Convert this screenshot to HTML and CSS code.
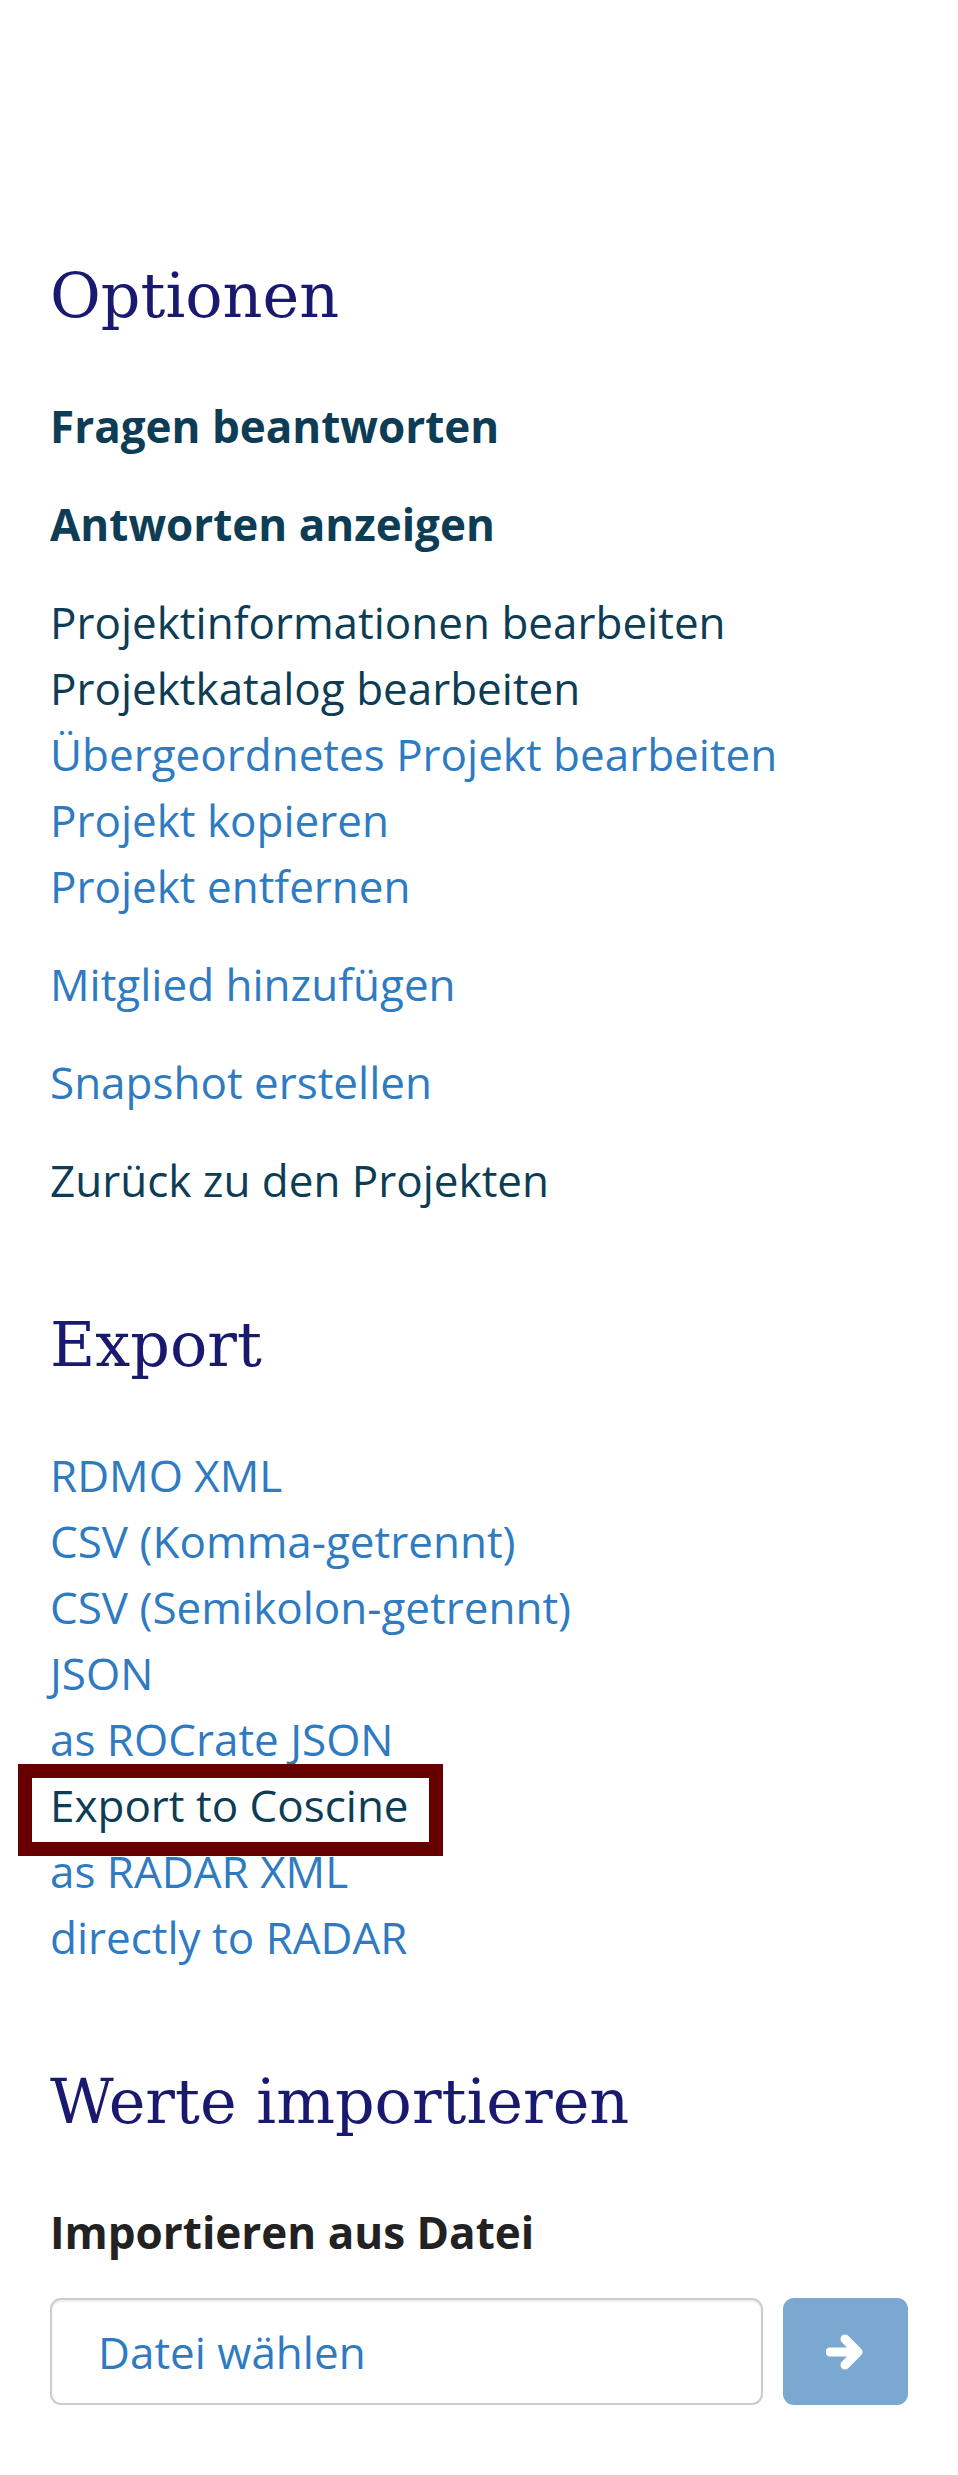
FILE: index.html
```html
<!DOCTYPE html>
<html lang="de">
<head>
<meta charset="utf-8">
<title>Optionen</title>
<link rel="stylesheet" href="styles.css">
</head>
<body>
<div class="sidebar">
  <h2 class="heading">Optionen</h2>
  <ul class="menu">
    <li><a class="item strong" href="#">Fragen beantworten</a></li>
  </ul>
  <ul class="menu">
    <li><a class="item strong" href="#">Antworten anzeigen</a></li>
  </ul>
  <ul class="menu">
    <li><a class="item dark" href="#">Projektinformationen bearbeiten</a></li>
    <li><a class="item dark" href="#">Projektkatalog bearbeiten</a></li>
    <li><a class="item" href="#">Übergeordnetes Projekt bearbeiten</a></li>
    <li><a class="item" href="#">Projekt kopieren</a></li>
    <li><a class="item" href="#">Projekt entfernen</a></li>
  </ul>
  <ul class="menu">
    <li><a class="item" href="#">Mitglied hinzufügen</a></li>
  </ul>
  <ul class="menu">
    <li><a class="item" href="#">Snapshot erstellen</a></li>
  </ul>
  <ul class="menu">
    <li><a class="item dark" href="#">Zurück zu den Projekten</a></li>
  </ul>

  <h2 class="heading">Export</h2>
  <ul class="menu">
    <li><a class="item" href="#">RDMO XML</a></li>
    <li><a class="item" href="#">CSV (Komma-getrennt)</a></li>
    <li><a class="item" href="#">CSV (Semikolon-getrennt)</a></li>
    <li><a class="item" href="#">JSON</a></li>
    <li><a class="item" href="#">as ROCrate JSON</a></li>
    <li class="highlighted"><a class="item dark" href="#">Export to Coscine</a></li>
    <li><a class="item" href="#">as RADAR XML</a></li>
    <li><a class="item" href="#">directly to RADAR</a></li>
  </ul>

  <h2 class="heading">Werte importieren</h2>
  <form class="import">
    <label class="import-label">Importieren aus Datei</label>
    <div class="import-row">
      <div class="file-input">Datei wählen</div>
      <button class="submit" type="button" disabled>
        <svg viewBox="0 0 40 44" width="40" height="44" aria-hidden="true">
          <path d="M4 22 H30 M19 9 L32 22 L19 35" fill="none" stroke="#ffffff" stroke-width="9" stroke-linecap="round" stroke-linejoin="round"/>
        </svg>
      </button>
    </div>
  </form>
</div>
</body>
</html>
```

FILE: styles.css
```css
html, body {
  margin: 0;
  padding: 0;
  background: #ffffff;
}

body {
  font-family: "Open Sans", "Noto Sans", sans-serif;
  font-size: 44px;
  line-height: 66px;
  color: #0d3c55;
}

.sidebar {
  padding: 0 50px;
}

.heading {
  font-family: "DejaVu Serif", "Liberation Serif", serif;
  font-weight: normal;
  font-size: 62px;
  line-height: 68px;
  color: #191970;
  margin: 98px 0 63px 0;
}

.sidebar > .heading:first-child {
  margin-top: 262px;
}

.menu {
  list-style: none;
  margin: 0 0 32px 0;
  padding: 0;
}

.menu li {
  position: relative;
}

.item {
  color: #2f7bc2;
  text-decoration: none;
}

.item.dark {
  color: #0d3c55;
}

.item.strong {
  color: #0d3c55;
  font-weight: bold;
}

.highlighted::before {
  content: "";
  position: absolute;
  left: -32px;
  top: -8px;
  width: 397px;
  height: 64px;
  border: 14px solid #660000;
  pointer-events: none;
}

.import-label {
  display: block;
  font-weight: bold;
  color: #222222;
  margin-bottom: 33px;
}

.import-row {
  display: flex;
  gap: 20px;
  align-items: stretch;
}

.file-input {
  flex: 1;
  box-sizing: border-box;
  height: 107px;
  border: 2px solid #cccccc;
  border-radius: 11px;
  box-shadow: inset 0 2px 2px rgba(0, 0, 0, 0.075);
  color: #2f7bc2;
  padding: 0 46px;
  display: flex;
  align-items: center;
}

.submit {
  width: 125px;
  height: 107px;
  border: none;
  border-radius: 11px;
  background: #7aa8d0;
  display: flex;
  align-items: center;
  justify-content: center;
  padding: 0;
}
```
